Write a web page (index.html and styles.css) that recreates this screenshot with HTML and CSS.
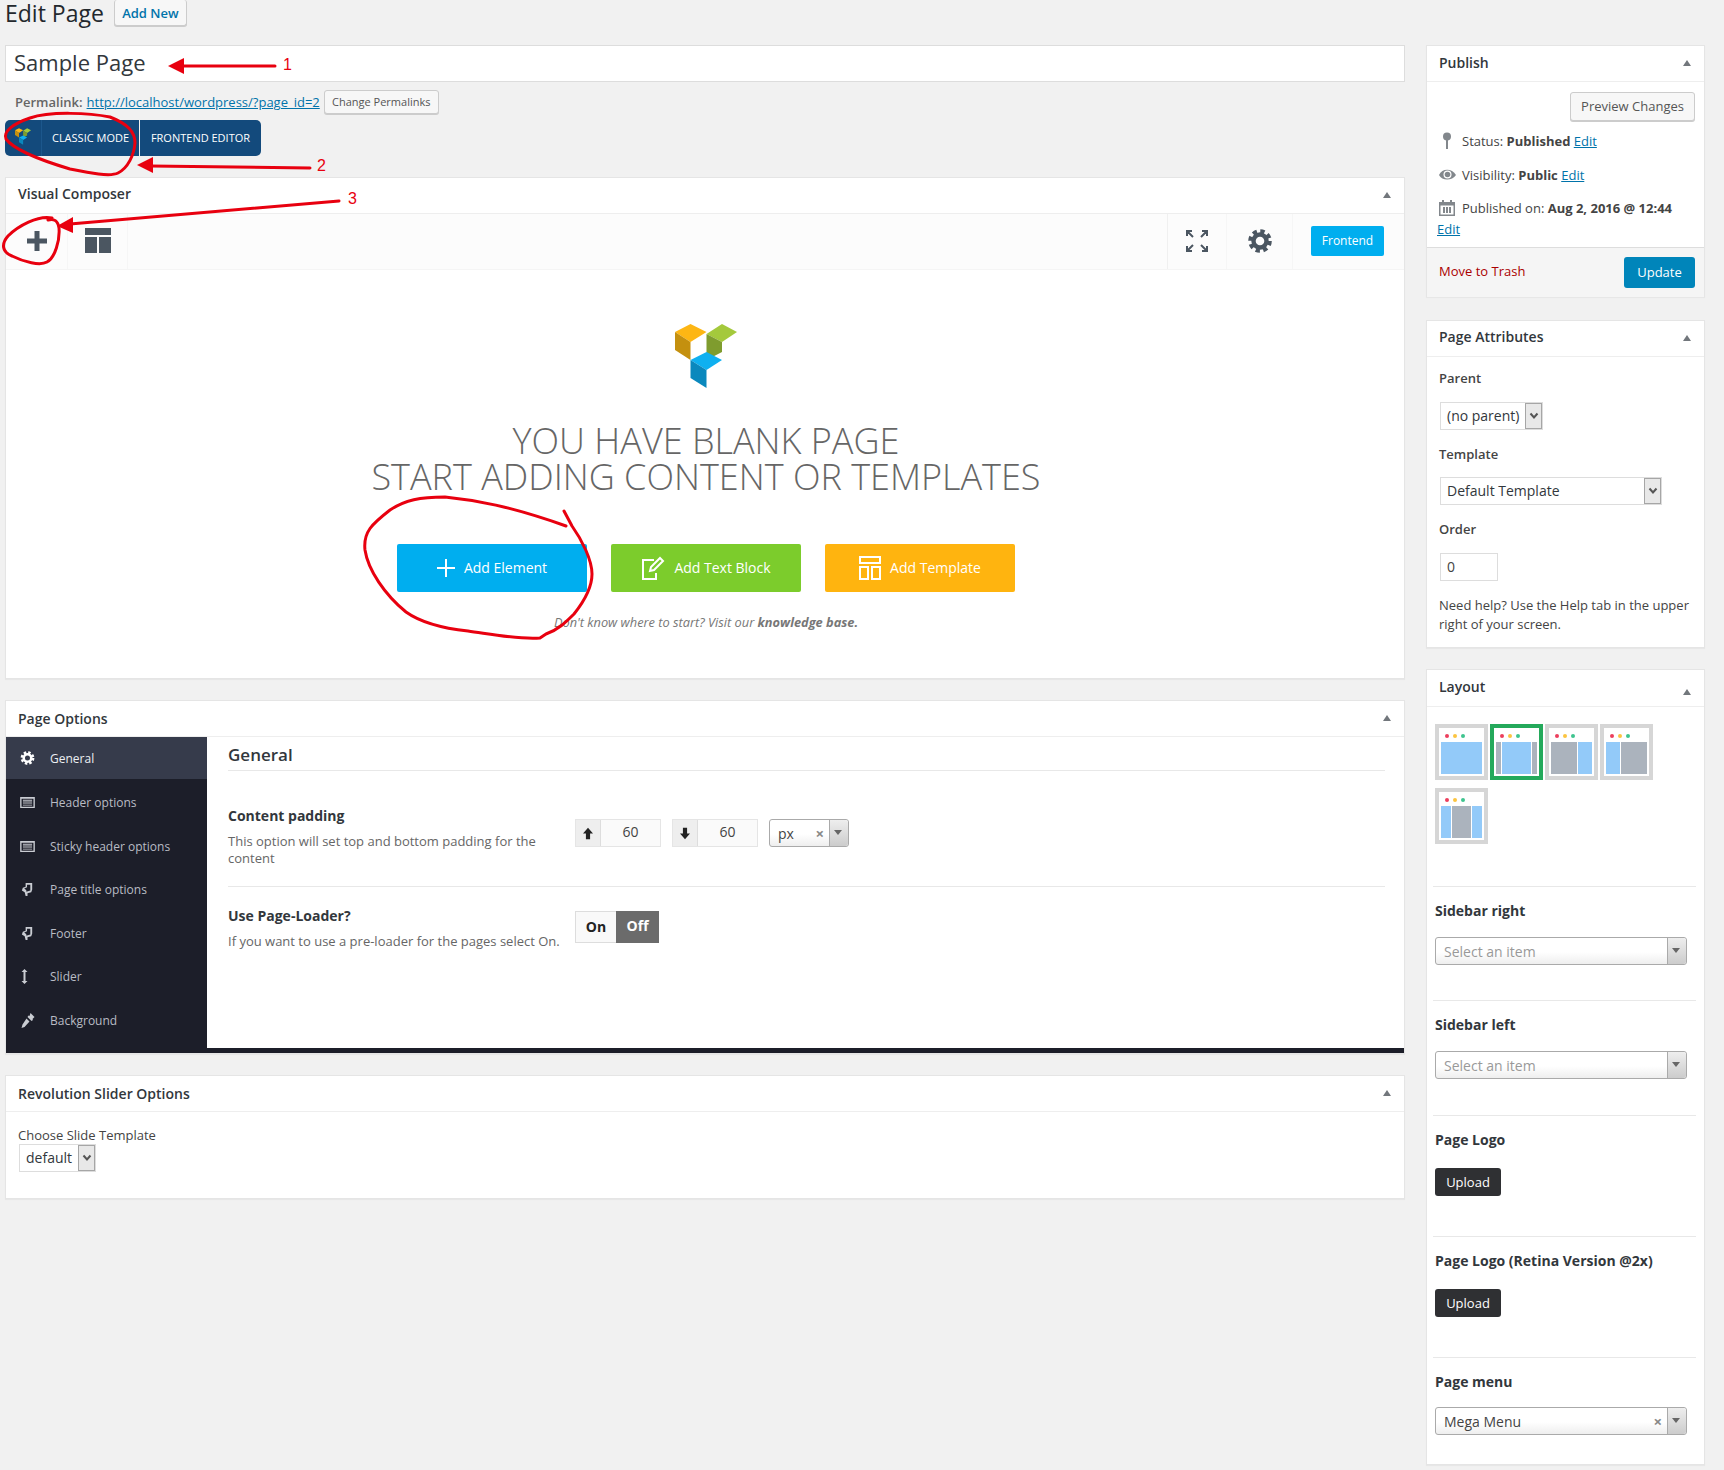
FILE: index.html
```html
<!DOCTYPE html>
<html lang="en">
<head>
  <meta charset="UTF-8">
  <title>Edit Page</title>
  <link rel="stylesheet" href="styles.css">
</head>
<body>
  <svg class="sprite" width="0" height="0">
    <symbol id="vc-logo" viewBox="0 0 62 64">
      <polygon points="0,8 15.5,0 31.5,8 15.5,18" fill="#fdb614"/>
      <polygon points="0,8 15.5,18 15.5,36 0,26" fill="#c4900f"/>
      <polygon points="31.5,10 47,0 62,8 47,18" fill="#a4c93c"/>
      <polygon points="31.5,10 47,18 47,28 31.5,36" fill="#7f9c2e"/>
      <polygon points="15.5,36 31.5,28 47,36 31.5,46" fill="#0fb0f0"/>
      <polygon points="15.5,36 31.5,46 31.5,64 15.5,54" fill="#0a88bd"/>
    </symbol>
    <symbol id="gear" viewBox="0 0 24 24">
      <circle cx="12" cy="12" r="9.6" fill="none" stroke="currentColor" stroke-width="4.4" stroke-dasharray="4.2 3.34"/>
      <circle cx="12" cy="12" r="6.5" fill="none" stroke="currentColor" stroke-width="4.4"/>
    </symbol>
    <symbol id="list" viewBox="0 0 16 12">
      <path d="M0 0h16v12H0z M1.5 2v8.500h13V2z" fill="currentColor" fill-rule="evenodd"/>
      <path d="M3 3h10v1H3zM3 5h10v1H3zM3 7h10v1H3zM3 9h10v.6H3z" fill="currentColor"/>
    </symbol>
    <symbol id="hand" viewBox="0 0 14 16">
      <path d="M5 1h7v7l-1 3-4 1v3H5l-1-4-3-2 1-3 3-1z M6.500 3v2.500L3.500 7l2 1.600.8 2.400.2-1 3.500-1V3z" fill="currentColor" fill-rule="evenodd"/>
    </symbol>
    <symbol id="chev" viewBox="0 0 10 8">
      <path d="M1.500 1.500 5 5.500l3.500-4" fill="none" stroke="#555" stroke-width="2"/>
    </symbol>
  </svg>

  <div class="wrap">
    <main class="main-col">
      <div class="page-head">
        <h1>Edit Page</h1>
        <a class="btn add-new">Add New</a>
      </div>
      <div class="title-input">Sample Page</div>
      <div class="permalink">
        <b>Permalink:</b>
        <a class="link">http://localhost/wordpress/?page_id=2</a>
        <span class="btn btn-small">Change Permalinks</span>
      </div>
      <div class="composer-switch">
        <span class="cs-logo"><svg width="16" height="17"><use href="#vc-logo"/></svg></span>
        <span class="cs-item cs-classic">CLASSIC MODE</span>
        <span class="cs-item cs-front">FRONTEND EDITOR</span>
      </div>

      <section class="box vc-box">
        <header class="box-head">Visual Composer<i class="toggle"></i></header>
        <div class="vc-toolbar">
          <span class="tool tool-add">
            <svg width="20" height="20" viewBox="0 0 20 20"><path d="M7.500 0h5v7.500H20v5h-7.500V20h-5v-7.500H0v-5h7.500z" fill="#4b5661"/></svg>
          </span>
          <span class="tool tool-layout">
            <svg width="26" height="25" viewBox="0 0 26 25"><path d="M0 0h26v7H0zM0 9h12v16H0zM14 9h12v16H14z" fill="#4b5661"/></svg>
          </span>
          <span class="tool-space"></span>
          <span class="tool tool-expand">
            <svg width="24" height="24" viewBox="0 0 24 24" fill="none" stroke="#4b5661" stroke-width="2">
              <path d="M2 7V2h5M2 2l6 6M17 2h5v5M22 2l-6 6M2 17v5h5M2 22l6-6M17 22h5v-5M22 22l-6-6"/>
            </svg>
          </span>
          <span class="tool tool-gear"><svg width="24" height="24"><use href="#gear"/></svg></span>
          <span class="tool-front"><a class="frontend-btn">Frontend</a></span>
        </div>
        <div class="blank-page">
          <svg class="blank-logo" width="62" height="64"><use href="#vc-logo"/></svg>
          <h2>YOU HAVE BLANK PAGE<br>START ADDING CONTENT OR TEMPLATES</h2>
          <div class="blank-actions">
            <a class="add-btn add-blue">
              <svg width="18" height="18" viewBox="0 0 18 18"><path d="M8 0h2v8h8v2h-8v8H8v-8H0V8h8z" fill="#fff"/></svg>
              Add Element
            </a>
            <a class="add-btn add-green">
              <svg width="24" height="24" viewBox="0 0 24 24" fill="none" stroke="#fff" stroke-width="2">
                <path d="M13 4H2v19h13v-6"/><path d="M9 15l1-4 9-9 3 3-9 9z"/>
              </svg>
              Add Text Block
            </a>
            <a class="add-btn add-orange">
              <svg width="22" height="24" viewBox="0 0 22 24" fill="none" stroke="#fff" stroke-width="2">
                <path d="M1 1h20v6H1zM1 11h8v12H1zM13 11h8v12h-8z"/>
              </svg>
              Add Template
            </a>
          </div>
          <p class="blank-note">Don't know where to start? Visit our <b>knowledge base.</b></p>
        </div>
      </section>

      <section class="box options-box">
        <header class="box-head">Page Options<i class="toggle"></i></header>
        <div class="options-body">
          <nav class="options-nav">
            <a class="nav-item active"><svg width="14" height="14"><use href="#gear"/></svg>General</a>
            <a class="nav-item"><svg width="15" height="11"><use href="#list"/></svg>Header options</a>
            <a class="nav-item"><svg width="15" height="11"><use href="#list"/></svg>Sticky header options</a>
            <a class="nav-item"><svg width="14" height="15"><use href="#hand"/></svg>Page title options</a>
            <a class="nav-item"><svg width="14" height="15"><use href="#hand"/></svg>Footer</a>
            <a class="nav-item">
              <svg width="14" height="15" viewBox="0 0 14 15"><path d="M4 0l3 3H5v9h2l-3 3-3-3h2V3H1z" fill="currentColor"/></svg>
              Slider
            </a>
            <a class="nav-item">
              <svg width="14" height="15" viewBox="0 0 14 15"><path d="M10 0l4 4-2 2 .5 1-1.500 1-4-4 1-1.500 1 .5zM6 5.500l3 3L4 14l-3 1 1-3.500z" fill="currentColor"/></svg>
              Background
            </a>
          </nav>
          <div class="options-content">
            <h3 class="tab-title">General</h3>
            <div class="opt-row opt-padding">
              <div class="opt-text">
                <h4>Content padding</h4>
                <p>This option will set top and bottom padding for the content</p>
              </div>
              <div class="opt-controls">
                <div class="num-field">
                  <span class="num-addon"><svg width="10" height="13" viewBox="0 0 12 14"><path d="M6 0l6 7H8.500v7h-5V7H0z" fill="#222"/></svg></span>
                  <span class="num-value">60</span>
                </div>
                <div class="num-field">
                  <span class="num-addon"><svg width="10" height="13" viewBox="0 0 12 14"><path d="M6 14l6-7H8.500V0h-5v7H0z" fill="#222"/></svg></span>
                  <span class="num-value">60</span>
                </div>
                <div class="sel2 sel2-unit"><span class="sel2-text">px</span><i class="sel2-x">×</i><span class="sel2-arrow"></span></div>
              </div>
            </div>
            <div class="opt-row opt-loader">
              <div class="opt-text">
                <h4>Use Page-Loader?</h4>
                <p>If you want to use a pre-loader for the pages select On.</p>
              </div>
              <div class="switch"><span class="switch-on">On</span><span class="switch-off">Off</span></div>
            </div>
          </div>
        </div>
      </section>

      <section class="box slider-box">
        <header class="box-head">Revolution Slider Options<i class="toggle"></i></header>
        <div class="slider-body">
          <label>Choose Slide Template</label>
          <div class="native-select ns-default"><span>default</span><i class="ns-arrow"><svg width="10" height="8"><use href="#chev"/></svg></i></div>
        </div>
      </section>
    </main>

    <aside class="side-col">
      <section class="box publish-box">
        <header class="box-head">Publish<i class="toggle"></i></header>
        <div class="publish-body">
          <div class="preview-row"><a class="btn btn-preview">Preview Changes</a></div>
          <div class="pub-row">
            <svg class="pub-icon" width="20" height="18" viewBox="0 0 20 18"><circle cx="9" cy="4.500" r="4" fill="#82878c"/><rect x="8" y="8" width="2" height="9" fill="#82878c"/></svg>
            <span>Status: <b>Published</b> <a class="link">Edit</a></span>
          </div>
          <div class="pub-row">
            <svg class="pub-icon" width="20" height="18" viewBox="0 0 20 18"><path d="M1 9c3-7 13-7 17 0-4 6-14 6-17 0z" fill="#82878c"/><circle cx="9.500" cy="8.500" r="4" fill="#fff"/><circle cx="9.500" cy="8.500" r="2.800" fill="#82878c"/></svg>
            <span>Visibility: <b>Public</b> <a class="link">Edit</a></span>
          </div>
          <div class="pub-row pub-date">
            <svg class="pub-icon" width="20" height="18" viewBox="0 0 20 18"><path d="M1 3h16v14H1z M2.500 6.500V15.500h13V6.500z" fill="#82878c" fill-rule="evenodd"/><path d="M4 1h2v4H4zM12 1h2v4h-2zM5 8h2v6H5zM8 8h2v6H8zM11 8h2v6h-2z" fill="#82878c"/></svg>
            <span>Published on: <b>Aug 2, 2016 @ 12:44</b></span>
          </div>
          <div class="pub-edit"><a class="link">Edit</a></div>
        </div>
        <div class="publish-foot">
          <a class="trash">Move to Trash</a>
          <a class="update-btn">Update</a>
        </div>
      </section>

      <section class="box attrs-box">
        <header class="box-head">Page Attributes<i class="toggle"></i></header>
        <div class="attrs-body">
          <div class="attr-label">Parent</div>
          <div class="native-select ns-parent"><span>(no parent)</span><i class="ns-arrow"><svg width="10" height="8"><use href="#chev"/></svg></i></div>
          <div class="attr-label">Template</div>
          <div class="native-select ns-template"><span>Default Template</span><i class="ns-arrow"><svg width="10" height="8"><use href="#chev"/></svg></i></div>
          <div class="attr-label">Order</div>
          <div class="order-input">0</div>
          <p class="attr-help">Need help? Use the Help tab in the upper right of your screen.</p>
        </div>
      </section>

      <section class="box layout-box">
        <header class="box-head">Layout<i class="toggle toggle-low"></i></header>
        <div class="layout-body">
          <div class="thumbs">
            <div class="thumb">
              <div class="dots"><i class="d-red"></i><i class="d-yellow"></i><i class="d-green"></i></div>
              <div class="panels"><i class="p-blue p-grow"></i></div>
            </div>
            <div class="thumb selected">
              <div class="dots"><i class="d-red"></i><i class="d-yellow"></i><i class="d-green"></i></div>
              <div class="panels"><i class="p-gray w5"></i><i class="p-blue p-grow"></i><i class="p-gray w5"></i></div>
            </div>
            <div class="thumb">
              <div class="dots"><i class="d-red"></i><i class="d-yellow"></i><i class="d-green"></i></div>
              <div class="panels"><i class="p-gray p-grow"></i><i class="p-blue w14"></i></div>
            </div>
            <div class="thumb">
              <div class="dots"><i class="d-red"></i><i class="d-yellow"></i><i class="d-green"></i></div>
              <div class="panels"><i class="p-blue w14"></i><i class="p-gray p-grow"></i></div>
            </div>
            <div class="thumb">
              <div class="dots"><i class="d-red"></i><i class="d-yellow"></i><i class="d-green"></i></div>
              <div class="panels"><i class="p-blue w10"></i><i class="p-gray p-grow"></i><i class="p-blue w10"></i></div>
            </div>
          </div>

          <div class="field field-a">
            <h4>Sidebar right</h4>
            <div class="sel2 sel2-wide"><span class="sel2-text placeholder">Select an item</span><span class="sel2-arrow"></span></div>
          </div>
          <div class="field field-b">
            <h4>Sidebar left</h4>
            <div class="sel2 sel2-wide"><span class="sel2-text placeholder">Select an item</span><span class="sel2-arrow"></span></div>
          </div>
          <div class="field field-c">
            <h4>Page Logo</h4>
            <a class="upload-btn">Upload</a>
          </div>
          <div class="field field-c">
            <h4>Page Logo (Retina Version @2x)</h4>
            <a class="upload-btn">Upload</a>
          </div>
          <div class="field field-menu">
            <h4>Page menu</h4>
            <div class="sel2 sel2-wide"><span class="sel2-text">Mega Menu</span><i class="sel2-x">×</i><span class="sel2-arrow"></span></div>
          </div>
        </div>
      </section>
    </aside>
  </div>

  <!-- red marks drawn over the screenshot -->
  <svg class="marks" width="1724" height="1470" viewBox="0 0 1724 1470">
    <g fill="none" stroke="#e8000f" stroke-width="3" stroke-linecap="round" stroke-linejoin="round">
      <path d="M110 117C90 113 50 111 30 118C12 124 3 132 6 139C14 150 40 160 70 169C90 173 110 177 118 173C128 168 134 155 135 143C135 132 128 124 110 117"/>
      <path d="M52 218C38 215 18 226 8 236C1 244 2 252 12 256C24 262 40 266 47 262C55 258 60 240 59 228C58 221 54 218 48 220"/>
      <path d="M564 511L572 526C582 540 592 560 592 574C592 590 582 604 574 614C566 622 558 630 546 634L540 638C520 640 490 634 468 631C440 628 420 622 406 612C385 595 368 570 365 550C363 532 372 524 390 510C405 500 420 497 445 497C475 500 510 506 566 526"/>
    </g>
    <g fill="none" stroke="#e8000f" stroke-width="3" stroke-linecap="round">
      <path d="M180 66H275"/>
      <path d="M150 166L310 168"/>
      <path d="M70 224L339 201"/>
    </g>
    <g fill="#e8000f">
      <polygon points="168,66 184,58 184,74"/>
      <polygon points="137,165 153,157 153,173"/>
      <polygon points="57,226 73,217 73,233"/>
      <text class="mark-num" x="283" y="70">1</text>
      <text class="mark-num" x="317" y="171">2</text>
      <text class="mark-num" x="348" y="204">3</text>
    </g>
  </svg>
</body>
</html>
```
FILE: styles.css
```css
* { box-sizing: border-box; }
html, body { margin: 0; height: 1470px; overflow: hidden; }
body {
  position: relative;
  background: #f1f1f1;
  color: #444;
  font-family: "Open Sans", "Liberation Sans", sans-serif;
  font-size: 13px;
}
a { text-decoration: none; }
.sprite { position: absolute; }
.link { color: #0073aa; text-decoration: underline; }
.wrap { display: flex; padding-left: 5px; }
.main-col { width: 1400px; }
.side-col { width: 279px; margin-left: 21px; padding-top: 45px; }

/* top of page */
.page-head { display: flex; height: 45px; align-items: flex-start; }
.page-head h1 { margin: 0; font-size: 23px; font-weight: 400; line-height: 27px; color: #23282d; }
.btn {
  display: inline-block;
  background: #f7f7f7;
  border: 1px solid #ccc;
  border-radius: 3px;
  box-shadow: 0 1px 0 #ccc;
  color: #555;
}
.add-new {
  margin-left: 10px;
  width: 73px;
  height: 26px;
  border-top: 0;
  text-align: center;
  color: #0073aa;
  font-weight: 600;
  line-height: 26px;
}
.title-input {
  height: 37px;
  padding-left: 8px;
  background: #fff;
  border: 1px solid #ddd;
  color: #32373c;
  font-size: 22px;
  line-height: 32px;
}
.permalink { display: flex; align-items: center; margin-top: 8px; height: 24px; padding-left: 10px; color: #666; }
.permalink b { font-weight: 600; }
.permalink .link { margin-left: 4px; }
.btn-small { margin-left: 4px; width: 115px; height: 24px; text-align: center; font-size: 11px; line-height: 22px; }
.composer-switch { display: flex; margin: 6px 0 0; height: 36px; color: #fff; font-size: 11px; line-height: 36px; }
.cs-logo {
  display: flex;
  align-items: center;
  width: 37px;
  padding: 0 0 4px 10px;
  background: #134a7c;
  border-radius: 5px 0 0 5px;
  border-right: 1px solid #1c578c;
}
.cs-item { background: #134a7c; text-align: center; }
.cs-classic { width: 97px; }
.cs-front { width: 121px; margin-left: 1px; border-radius: 0 5px 5px 0; }

/* boxes */
.box { background: #fff; border: 1px solid #e5e5e5; box-shadow: 0 1px 1px rgba(0,0,0,.04); }
.box-head {
  position: relative;
  height: 36px;
  padding-left: 12px;
  border-bottom: 1px solid #eee;
  color: #32373c;
  font-size: 14px;
  font-weight: 600;
  line-height: 33px;
}
.options-box .box-head, .slider-box .box-head { line-height: 35px; }
.attrs-box .box-head { line-height: 31px; }
.toggle {
  position: absolute;
  top: 14px;
  right: 13px;
  border-left: 4px solid transparent;
  border-right: 4px solid transparent;
  border-bottom: 6px solid #72777c;
}
.toggle-low { top: 19px; }

.vc-box { margin-top: 21px; height: 502px; }
.vc-box .box-head { line-height: 31px; }
.vc-toolbar { display: flex; height: 56px; background: #fcfcfc; border-bottom: 1px solid #f5f5f5; }
.tool { display: flex; align-items: center; justify-content: center; height: 55px; padding-bottom: 2px; border-right: 1px solid #f6f6f6; }
.tool-add { width: 62px; }
.tool-layout { width: 60px; }
.tool-space { flex: 1; border-right: 1px solid #f0f0f0; }
.tool-expand { width: 59px; }
.tool-gear { width: 66px; color: #4b5661; }
.tool-front { width: 111px; padding: 12px 0 0 18px; }
.frontend-btn {
  display: block;
  width: 73px;
  height: 30px;
  background: #00aeef;
  border-radius: 2px;
  color: #fff;
  font-size: 12px;
  line-height: 29px;
  text-align: center;
}
.blank-page { text-align: center; padding: 54px 0 0 2px; }
.blank-logo { display: block; margin: 0 auto; }
.blank-page h2 {
  margin: 35px 0 0;
  color: #666;
  font-size: 36px;
  font-weight: 300;
  line-height: 36px;
}
.blank-actions { display: flex; justify-content: center; gap: 24px; margin-top: 49px; }
.add-btn {
  display: flex;
  align-items: center;
  justify-content: center;
  gap: 9px;
  width: 190px;
  height: 48px;
  padding-bottom: 1px;
  border-radius: 2px;
  color: #fff;
  font-size: 14px;
}
.add-blue { background: #00aeef; }
.add-green { background: #7ccc2c; }
.add-orange { background: #ffb40f; }
.blank-note { margin: 21px 0 0; color: #777; font-size: 12.8px; font-style: italic; line-height: 18px; }

/* page options */
.options-box { margin-top: 21px; height: 354px; }
.options-body { display: flex; height: 316px; border-bottom: 5px solid #1c1e29; }
.options-nav { width: 201px; background: #1c1e29; }
.nav-item { display: flex; align-items: center; height: 43.5px; padding-left: 14px; color: #b9bcc4; font-size: 12px; }
.nav-item svg { width: 15px; margin-right: 15px; color: #c9ccd2; }
.nav-item.active { height: 42px; margin-bottom: 2px; background: #363b4b; color: #eceef2; }
.nav-item.active svg { color: #fff; }
.options-content { flex: 1; padding: 0 19px 0 21px; }
.tab-title {
  margin: 0;
  height: 34px;
  border-bottom: 1px solid #e8e8e8;
  color: #32373c;
  font-size: 17px;
  font-weight: 600;
  line-height: 36px;
}
.opt-row { display: flex; }
.opt-text { width: 347px; padding-right: 7px; }
.opt-text h4 { margin: 0; color: #32373c; font-size: 14px; font-weight: 700; line-height: 18px; }
.opt-text p { margin: 8px 0 0; color: #666; font-size: 13px; line-height: 17px; }
.opt-padding { height: 116px; padding-top: 36px; border-bottom: 1px solid #e8e8e8; }
.opt-controls { display: flex; gap: 11px; margin-top: 12px; }
.num-field { display: flex; width: 86px; height: 28px; border: 1px solid #e5e5e5; }
.num-addon {
  display: flex;
  align-items: center;
  justify-content: center;
  width: 25px;
  background: #eee;
  border-right: 1px solid #ddd;
}
.num-value { flex: 1; background: #fafafa; color: #444; font-size: 14px; line-height: 24px; text-align: center; }
.opt-loader { padding-top: 20px; }
.opt-loader .switch { margin-top: 4px; }
.switch { display: flex; width: 84px; height: 32px; border-radius: 2px; font-size: 14px; font-weight: 700; line-height: 30px; text-align: center; }
.switch-on { width: 41px; background: #f9f9f9; border: 1px solid #ddd; border-right: 0; color: #222; }
.switch-off { flex: 1; background: #6b6b6b; color: #fff; }

/* select widgets */
.sel2 {
  position: relative;
  display: flex;
  align-items: center;
  height: 28px;
  padding-left: 8px;
  background: linear-gradient(#fff 55%, #eee);
  border: 1px solid #aaa;
  border-radius: 3px;
  color: #444;
  font-size: 14px;
}
.sel2-unit { width: 80px; }
.sel2-wide { width: 252px; }
.sel2-text { flex: 1; }
.placeholder { color: #999; }
.sel2-x { position: absolute; right: 24px; top: 3px; color: #888; font-size: 15px; font-style: normal; font-weight: 700; }
.sel2-arrow {
  align-self: stretch;
  width: 19px;
  background: linear-gradient(#eee, #ccc);
  border-left: 1px solid #aaa;
  border-radius: 0 3px 3px 0;
  position: relative;
}
.sel2-arrow::after {
  content: "";
  position: absolute;
  left: 4px;
  top: 10px;
  border-left: 4px solid transparent;
  border-right: 4px solid transparent;
  border-top: 5px solid #666;
}
.native-select {
  display: flex;
  height: 28px;
  background: #fff;
  border: 1px solid #ddd;
  color: #32373c;
  font-size: 14px;
  line-height: 26px;
}
.native-select span { flex: 1; padding-left: 6px; }
.ns-arrow {
  display: flex;
  align-items: center;
  justify-content: center;
  width: 17px;
  background: #e8e8e8;
  border: 1px solid #a6a6a6;
}
.ns-parent { width: 103px; }
.ns-template { width: 222px; }
.ns-default { width: 77px; margin-left: 1px; }

/* revolution slider */
.slider-box { margin-top: 21px; height: 124px; }
.slider-body { padding: 14px 12px; }
.slider-body label { display: block; color: #444; line-height: 18px; }
.slider-body .ns-default { margin-top: 0; }

/* publish */
.publish-box { height: 252px; }
.publish-body { height: 165px; padding: 10px 9px 0 12px; }
.preview-row { display: flex; justify-content: flex-end; }
.btn-preview { width: 125px; height: 29px; text-align: center; line-height: 26px; }
.pub-row { display: flex; align-items: center; gap: 3px; height: 18px; margin-top: 11px; white-space: nowrap; }
.pub-row + .pub-row { margin-top: 16px; }
.pub-row.pub-date { margin-top: 15px; }
.pub-icon { margin-left: -1px; margin-right: 1px; }
.pub-edit { margin: 3px 0 0 -2px; line-height: 18px; }
.publish-foot {
  display: flex;
  align-items: center;
  justify-content: space-between;
  height: 50px;
  padding: 0 9px 0 12px;
  background: #f5f5f5;
  border-top: 1px solid #ddd;
}
.trash { color: #a00; margin-bottom: 4px; }
.update-btn {
  width: 71px;
  height: 31px;
  background: #0085ba;
  border-radius: 3px;
  color: #fff;
  line-height: 31px;
  text-align: center;
}

/* page attributes */
.attrs-box { margin-top: 23px; height: 328px; }
.attrs-body { padding: 12px 12px 0 13px; }
.attr-label { margin: 15px 0 0 -1px; color: #444; font-weight: 600; line-height: 18px; }
.attr-label:first-child { margin-top: 0; }
.attrs-body .native-select { margin-top: 15px; }
.attrs-body .attr-label + .ns-template { margin-top: 14px; }
.order-input {
  width: 58px;
  height: 28px;
  margin-top: 15px;
  padding-left: 6px;
  border: 1px solid #ddd;
  font-size: 14px;
  line-height: 26px;
}
.attr-help { margin: 15px 0 0 -1px; line-height: 19px; }

/* layout metabox */
.layout-box { margin-top: 21px; height: 796px; }
.layout-box .box-head { height: 37px; }
.layout-body { padding: 17px 8px 0 8px; }
.thumbs { display: flex; flex-wrap: wrap; align-content: flex-start; gap: 8px 2px; width: 226px; height: 162px; }
.thumb { width: 53px; height: 56px; padding: 0 2px; background: #fff; border: 4px solid #d6d6d6; }
.thumb.selected { border-color: #24a95b; }
.dots { display: flex; gap: 4px; height: 14px; padding: 6px 0 0 4px; }
.dots i { width: 4px; height: 4px; border-radius: 50%; }
.d-red { background: #ec3f5d; }
.d-yellow { background: #fcc440; }
.d-green { background: #3fc48f; }
.panels { display: flex; gap: 1px; height: 32px; }
.panels i { display: block; }
.p-blue { background: #93caf9; }
.p-gray { background: #abb3bd; }
.p-grow { flex: 1; }
.w5 { width: 5px; }
.w10 { width: 10px; }
.w14 { width: 14px; }
.field { margin-left: -2px; padding: 15px 0 0 2px; border-top: 1px solid #e8e8e8; }
.field-a { height: 114px; }
.field-b { height: 115px; }
.field-c { height: 121px; }
.field h4 { margin: 0 0 17px; color: #32373c; font-size: 14px; font-weight: 700; line-height: 18px; }
.field-menu h4 { margin-bottom: 16px; }
.upload-btn {
  display: block;
  width: 66px;
  height: 28px;
  margin-top: 19px;
  background: #2f3033;
  border-radius: 3px;
  color: #fff;
  line-height: 28px;
  text-align: center;
}

/* annotation overlay */
.marks { position: absolute; left: 0; top: 0; pointer-events: none; }
.mark-num { font-family: "Liberation Sans", sans-serif; font-size: 16px; }
```
